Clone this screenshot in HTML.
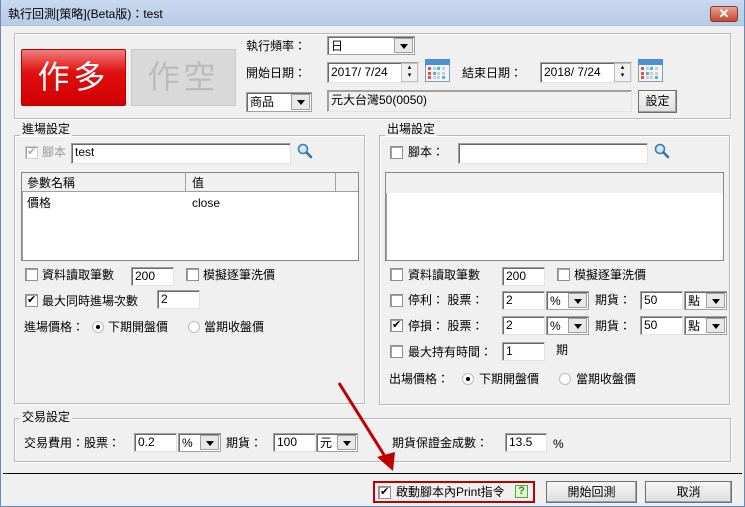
<!DOCTYPE html>
<html><head><meta charset="utf-8"><style>
*{margin:0;padding:0;box-sizing:border-box}
body{width:745px;height:507px;overflow:hidden;background:#f0f0f0;font-family:"Liberation Sans","Noto Sans CJK TC",sans-serif;font-size:12px;color:#000;position:relative}
.a{position:absolute;white-space:nowrap;line-height:14px}
.frame{position:absolute;left:0;top:0;width:745px;height:507px;border:1px solid #6a8bb5;border-top:none}
.title{position:absolute;left:0;top:0;width:745px;height:26px;background:linear-gradient(#c9d9ee,#b7cbe6);border-bottom:1px solid #a9bfdc}
.gb{position:absolute;border:1px solid #d5dfe5;box-shadow:inset 1px 1px 0 #fff,1px 1px 0 #fff;border-color:#b9b9b9}
.gl{position:absolute;background:#f0f0f0;padding:0 2px;line-height:14px}
.in{position:absolute;background:#fff;border:1px solid #a0a0a0;border-right-color:#e3e3e3;border-bottom-color:#e3e3e3;box-shadow:inset 1px 1px 0 #696969;padding:2px 0 0 3px;line-height:14px;font-size:12px}
.cb{position:absolute;width:13px;height:13px;background:#fff;border:1px solid #8e8f8f;box-shadow:inset 1px 1px 0 #a0a0a0}
.cb.k::after{content:"✔";position:absolute;left:1px;top:-2px;font-size:11px;line-height:14px}
.rd{position:absolute;width:12px;height:12px;border-radius:50%;background:#fff;border:1px solid #bbb}
.rd.k::after{content:"";position:absolute;left:3px;top:3px;width:4px;height:4px;border-radius:50%;background:#000}
.sel{position:absolute;background:#fff;border:1px solid #a0a0a0;box-shadow:inset 1px 1px 0 #696969;padding:2px 0 0 3px;line-height:14px}
.sel::after{content:"";position:absolute;right:1px;top:1px;bottom:1px;width:17px;background:#e8e8e8;border:1px solid #a0a0a0}
.sel::before{content:"";position:absolute;right:6px;top:50%;margin-top:-2px;border:4px solid transparent;border-top:5px solid #000;z-index:2}
.btn{position:absolute;background:linear-gradient(#f6f6f6,#dedede);border:1px solid #707070;box-shadow:inset -1px -1px 0 #a0a0a0;text-align:center;line-height:20px}
.cal{position:absolute;width:25px;height:23px}
.mag{position:absolute;width:16px;height:16px}
</style></head><body>
<div class="title"></div>
<div class="a" style="left:8px;top:7px">執行回測[策略](Beta版)：test</div>
<div style="position:absolute;left:710px;top:6px;width:28px;height:16px;border-radius:3px;background:linear-gradient(#e8a493,#c7452e);border:1px solid #8b3b2e;color:#fff;font-size:13px;line-height:13px;text-align:center;font-weight:bold">✕</div>
<div class="frame"></div>

<!-- top group -->
<div class="gb" style="left:14px;top:33px;width:717px;height:86px"></div>
<div style="position:absolute;left:21px;top:49px;width:105px;height:57px;background:linear-gradient(#f07c7c,#e01010 40%,#d00000);border:1px solid #b00;border-radius:2px;color:#fff;font-size:32px;line-height:55px;text-align:center;letter-spacing:4px">作多</div>
<div style="position:absolute;left:131px;top:49px;width:105px;height:57px;background:#d9d9d9;border:1px solid #c8c8c8;color:#bbb;font-size:32px;line-height:55px;text-align:center;letter-spacing:4px">作空</div>
<div class="a" style="left:246px;top:39px">執行頻率：</div>
<div class="sel" style="left:327px;top:36px;width:88px;height:19px">日</div>
<div class="a" style="left:246px;top:66px">開始日期：</div>
<div class="in" style="left:327px;top:62px;width:92px;height:21px">2017/ 7/24</div>
<div style="position:absolute;left:401px;top:63px;width:17px;height:19px;background:#f0f0f0;border:1px solid #c0c0c0;font-size:7px;line-height:8px;text-align:center">▴<br>▾</div>
<div class="a" style="left:462px;top:66px">結束日期：</div>
<div class="in" style="left:540px;top:62px;width:92px;height:21px">2018/ 7/24</div>
<div style="position:absolute;left:614px;top:63px;width:17px;height:19px;background:#f0f0f0;border:1px solid #c0c0c0;font-size:7px;line-height:8px;text-align:center">▴<br>▾</div>
<svg class="cal" style="left:425px;top:59px" viewBox="0 0 25 23"><rect x="0.5" y="0.5" width="24" height="22" fill="#f4f4f4" stroke="#8a9aa8"/><rect x="0" y="0" width="25" height="6" fill="#4a8fd8"/><g fill="#e05050"><rect x="3" y="8" width="3" height="3"/><rect x="3" y="13" width="3" height="3"/><rect x="3" y="17" width="3" height="3"/></g><g fill="#40c0d0"><rect x="12" y="8" width="3" height="3"/><rect x="8" y="13" width="3" height="3"/><rect x="17" y="17" width="3" height="3"/></g><g fill="#ccd"><rect x="8" y="8" width="3" height="3"/><rect x="17" y="8" width="3" height="3"/><rect x="12" y="13" width="3" height="3"/><rect x="17" y="13" width="3" height="3"/><rect x="8" y="17" width="3" height="3"/><rect x="12" y="17" width="3" height="3"/></g></svg>
<svg class="cal" style="left:638px;top:59px" viewBox="0 0 25 23"><rect x="0.5" y="0.5" width="24" height="22" fill="#f4f4f4" stroke="#8a9aa8"/><rect x="0" y="0" width="25" height="6" fill="#4a8fd8"/><g fill="#e05050"><rect x="3" y="8" width="3" height="3"/><rect x="3" y="13" width="3" height="3"/><rect x="3" y="17" width="3" height="3"/></g><g fill="#40c0d0"><rect x="12" y="8" width="3" height="3"/><rect x="8" y="13" width="3" height="3"/><rect x="17" y="17" width="3" height="3"/></g><g fill="#ccd"><rect x="8" y="8" width="3" height="3"/><rect x="17" y="8" width="3" height="3"/><rect x="12" y="13" width="3" height="3"/><rect x="17" y="13" width="3" height="3"/><rect x="8" y="17" width="3" height="3"/><rect x="12" y="17" width="3" height="3"/></g></svg>
<div class="sel" style="left:246px;top:92px;width:66px;height:20px">商品</div>
<div class="in" style="left:327px;top:90px;width:305px;height:22px;background:#f0f0f0;box-shadow:inset 1px 1px 0 #a0a0a0">元大台灣50(0050)</div>
<div class="btn" style="left:638px;top:90px;width:39px;height:23px">設定</div>

<!-- entry group -->
<div class="gb" style="left:14px;top:135px;width:351px;height:269px"></div>
<div class="gl" style="left:20px;top:122px">進場設定</div>
<div class="cb k" style="left:25px;top:146px;color:#aaa;border-color:#ccc"></div>
<div class="a" style="left:42px;top:145px;color:#999">腳本</div>
<div class="in" style="left:71px;top:143px;width:220px;height:21px;padding-top:1px">test</div>
<svg class="mag" style="left:297px;top:143px" viewBox="0 0 16 16"><circle cx="6" cy="6" r="4.5" fill="#cfe8fb" stroke="#3a78b8" stroke-width="1.6"/><path d="M9.5 9.5L14 14" stroke="#3a6fa8" stroke-width="2.6" stroke-linecap="round"/></svg>
<div style="position:absolute;left:21px;top:172px;width:338px;height:89px;background:#fff;border:1px solid #828790;box-shadow:inset 1px 1px 0 #a0a0a0"></div>
<div style="position:absolute;left:22px;top:173px;width:336px;height:19px;background:#f0f0f0;border-bottom:1px solid #a0a0a0"></div>
<div style="position:absolute;left:185px;top:173px;width:1px;height:19px;background:#a0a0a0"></div>
<div style="position:absolute;left:335px;top:173px;width:1px;height:19px;background:#a0a0a0"></div>
<div class="a" style="left:27px;top:176px">參數名稱</div>
<div class="a" style="left:192px;top:176px">值</div>
<div class="a" style="left:27px;top:196px">價格</div>
<div class="a" style="left:192px;top:196px">close</div>
<div class="cb" style="left:25px;top:268px"></div>
<div class="a" style="left:42px;top:268px">資料讀取筆數</div>
<div class="in" style="left:131px;top:267px;width:43px;height:19px;padding-top:1px">200</div>
<div class="cb" style="left:186px;top:268px"></div>
<div class="a" style="left:203px;top:268px">模擬逐筆洗價</div>
<div class="cb k" style="left:25px;top:294px"></div>
<div class="a" style="left:42px;top:294px">最大同時進場次數</div>
<div class="in" style="left:157px;top:290px;width:43px;height:19px;padding-top:1px">2</div>
<div class="a" style="left:24px;top:320px">進場價格：</div>
<div class="rd k" style="left:92px;top:321px"></div>
<div class="a" style="left:108px;top:320px">下期開盤價</div>
<div class="rd" style="left:188px;top:321px"></div>
<div class="a" style="left:204px;top:320px">當期收盤價</div>

<!-- exit group -->
<div class="gb" style="left:379px;top:135px;width:351px;height:270px"></div>
<div class="gl" style="left:385px;top:122px">出場設定</div>
<div class="cb" style="left:390px;top:146px"></div>
<div class="a" style="left:408px;top:145px">腳本：</div>
<div class="in" style="left:458px;top:143px;width:190px;height:21px"></div>
<svg class="mag" style="left:654px;top:143px" viewBox="0 0 16 16"><circle cx="6" cy="6" r="4.5" fill="#cfe8fb" stroke="#3a78b8" stroke-width="1.6"/><path d="M9.5 9.5L14 14" stroke="#3a6fa8" stroke-width="2.6" stroke-linecap="round"/></svg>
<div style="position:absolute;left:385px;top:172px;width:339px;height:89px;background:#fff;border:1px solid #828790;box-shadow:inset 1px 1px 0 #a0a0a0"></div>
<div style="position:absolute;left:386px;top:173px;width:337px;height:20px;background:#f0f0f0"></div>
<div class="cb" style="left:390px;top:268px"></div>
<div class="a" style="left:408px;top:268px">資料讀取筆數</div>
<div class="in" style="left:502px;top:267px;width:43px;height:19px;padding-top:1px">200</div>
<div class="cb" style="left:557px;top:268px"></div>
<div class="a" style="left:574px;top:268px">模擬逐筆洗價</div>
<div class="cb" style="left:390px;top:294px"></div>
<div class="a" style="left:408px;top:293px">停利：&nbsp;股票：</div>
<div class="in" style="left:502px;top:291px;width:43px;height:19px;padding-top:1px">2</div>
<div class="sel" style="left:546px;top:291px;width:43px;height:19px">%</div>
<div class="a" style="left:595px;top:293px">期貨：</div>
<div class="in" style="left:640px;top:291px;width:43px;height:19px;padding-top:1px">50</div>
<div class="sel" style="left:684px;top:291px;width:43px;height:19px">點</div>
<div class="cb k" style="left:390px;top:319px"></div>
<div class="a" style="left:408px;top:319px">停損：&nbsp;股票：</div>
<div class="in" style="left:502px;top:316px;width:43px;height:19px;padding-top:1px">2</div>
<div class="sel" style="left:546px;top:316px;width:43px;height:19px">%</div>
<div class="a" style="left:595px;top:319px">期貨：</div>
<div class="in" style="left:640px;top:316px;width:43px;height:19px;padding-top:1px">50</div>
<div class="sel" style="left:684px;top:316px;width:43px;height:19px">點</div>
<div class="cb" style="left:390px;top:345px"></div>
<div class="a" style="left:408px;top:345px">最大持有時間：</div>
<div class="in" style="left:502px;top:342px;width:43px;height:19px;padding-top:1px">1</div>
<div class="a" style="left:556px;top:343px">期</div>
<div class="a" style="left:389px;top:372px">出場價格：</div>
<div class="rd k" style="left:462px;top:373px"></div>
<div class="a" style="left:479px;top:372px">下期開盤價</div>
<div class="rd" style="left:559px;top:373px"></div>
<div class="a" style="left:576px;top:372px">當期收盤價</div>

<!-- trade group -->
<div class="gb" style="left:14px;top:418px;width:717px;height:44px"></div>
<div class="gl" style="left:20px;top:410px">交易設定</div>
<div class="a" style="left:24px;top:436px">交易費用：股票：</div>
<div class="in" style="left:134px;top:433px;width:43px;height:19px;padding-top:1px">0.2</div>
<div class="sel" style="left:178px;top:433px;width:43px;height:19px">%</div>
<div class="a" style="left:226px;top:436px">期貨：</div>
<div class="in" style="left:273px;top:433px;width:43px;height:19px;padding-top:1px">100</div>
<div class="sel" style="left:316px;top:433px;width:42px;height:19px">元</div>
<div class="a" style="left:392px;top:436px">期貨保證金成數：</div>
<div class="in" style="left:505px;top:433px;width:42px;height:19px;padding-top:1px">13.5</div>
<div class="a" style="left:553px;top:437px">%</div>

<div style="position:absolute;left:3px;top:473px;width:739px;height:1px;background:#000"></div>
<div style="position:absolute;left:373px;top:481px;width:162px;height:22px;border:2px solid #c00000"></div>
<div class="cb k" style="left:378px;top:486px"></div>
<div class="a" style="left:396px;top:485px">啟動腳本內Print指令</div>
<div style="position:absolute;left:515px;top:485px;width:13px;height:13px;border:1px solid #4a4;background:#e6f6d0;color:#2a8a2a;font-size:11px;line-height:11px;text-align:center;font-weight:bold">?</div>
<div class="btn" style="left:546px;top:481px;width:91px;height:22px">開始回測</div>
<div class="btn" style="left:645px;top:481px;width:87px;height:22px">取消</div>

<svg style="position:absolute;left:0;top:0" width="745" height="507"><line x1="339" y1="383" x2="386" y2="458" stroke="#c00000" stroke-width="3"/><polygon points="393,471 377,457 395,452" fill="#c00000"/></svg>
</body></html>
